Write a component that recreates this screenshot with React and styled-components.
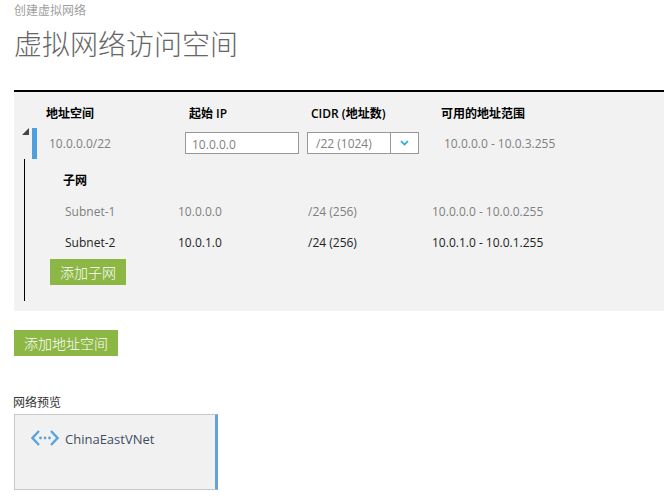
import React from "react";
import styled, { createGlobalStyle } from "styled-components";

const FONT = `"Open Sans", "Noto Sans CJK SC", sans-serif`;

const GlobalStyle = createGlobalStyle`
  html, body {
    margin: 0;
    padding: 0;
    background: #fff;
    font-family: ${FONT};
  }
`;

const Page = styled.div`
  width: 670px;
  height: 497px;
  overflow: hidden;
  padding: 2px 6px 0 14px;
  box-sizing: border-box;
`;

const Crumb = styled.div`
  font-size: 12px;
  line-height: 17px;
  color: #a0a0a0;
`;

const Title = styled.h1`
  margin: 6px 0 0;
  font-size: 28px;
  line-height: 38px;
  font-weight: 300;
  color: #666;
`;

const Panel = styled.section`
  margin-top: 27px;
  height: 221px;
  box-sizing: border-box;
  border-top: 2px solid #000;
  background: #f2f2f2;
  padding-top: 10px;
`;

const SpaceHead = styled.div`
  display: grid;
  grid-template-columns: 143px 122px 130px 1fr;
  padding-left: 32px;
  height: 21px;
  align-items: center;
  font-size: 12px;
  font-weight: 600;
  color: #000;
`;

const SpaceRow = styled.div`
  display: flex;
  align-items: center;
  height: 31px;
  margin-top: 5px;
  position: relative;
`;

const Caret = styled.span`
  position: absolute;
  left: 8px;
  top: 0;
  width: 0;
  height: 0;
  border-left: 7px solid transparent;
  border-bottom: 7px solid #444;
`;

const Marker = styled.span`
  width: 5px;
  height: 31px;
  margin-left: 18px;
  background: #4f9fdc;
`;

const SpaceValue = styled.span`
  width: 136px;
  margin-left: 12px;
  font-size: 12px;
  color: #7f7f7f;
`;

const Field = styled.div`
  width: 114px;
  height: 22px;
  margin-bottom: 2px;
  box-sizing: border-box;
  border: 1px solid #999;
  background: #fff;
  padding-left: 6px;
  font-size: 12px;
  line-height: 24px;
  color: #7f7f7f;
`;

const Select = styled.div`
  display: flex;
  width: 112px;
  height: 22px;
  margin: 0 0 2px 8px;
  box-sizing: border-box;
  border: 1px solid #999;
  background: #fff;
  font-size: 12px;
  line-height: 22px;
  color: #7f7f7f;
`;

const SelectValue = styled.span`
  flex: 1;
  padding-left: 8px;
`;

const SelectArrow = styled.span`
  display: flex;
  align-items: center;
  justify-content: center;
  width: 27px;
  border-left: 1px solid #999;
`;

const RangeValue = styled.span`
  margin-left: 25px;
  font-size: 12px;
  color: #7f7f7f;
`;

const Subnets = styled.div`
  margin: 0 0 0 10px;
  height: 142px;
  box-sizing: border-box;
  border-left: 1px solid #000;
  padding-top: 11px;
`;

const SubnetTitle = styled.div`
  margin-left: 38px;
  font-size: 12px;
  line-height: 22px;
  font-weight: 600;
  color: #000;
`;

const SubnetList = styled.div`
  margin-top: 4px;
`;

const SubnetRow = styled.div`
  display: grid;
  grid-template-columns: 113px 130px 124px 1fr;
  height: 31px;
  padding-left: 40px;
  align-items: center;
  font-size: 12px;
  color: ${(p) => (p.$active ? "#222" : "#7f7f7f")};
`;

const Button = styled.button`
  display: block;
  height: 26px;
  padding: 0;
  border: 0;
  background: #8cb745;
  color: #fff;
  font-family: ${FONT};
  font-size: 14px;
  font-weight: 300;
`;

const AddSubnet = styled(Button)`
  margin: 1px 0 0 25px;
  width: 76px;
`;

const AddSpace = styled(Button)`
  margin-top: 19px;
  width: 104px;
`;

const PreviewLabel = styled.div`
  margin: 37px 0 0 -1px;
  font-size: 12px;
  line-height: 20px;
  color: #333;
`;

const Tile = styled.div`
  display: flex;
  align-items: flex-start;
  gap: 6px;
  width: 204px;
  height: 76px;
  margin-top: 1px;
  box-sizing: border-box;
  border: 1px solid #c6c6c6;
  border-right: 3px solid #62a4d9;
  background: #f1f1f1;
  padding: 14px 0 0 16px;
  font-size: 13px;
  line-height: 19px;
  color: #3f4d5f;
`;

const TileName = styled.span`
  padding-top: 1px;
`;

const Chevron = () => (
  <svg width="9" height="6" viewBox="0 0 9 6" fill="none">
    <path d="M1 1l3.5 3.5L8 1" stroke="#1aa8e0" strokeWidth="1.6" />
  </svg>
);

const VnetIcon = () => (
  <svg width="28" height="18" viewBox="0 0 28 18" fill="none">
    <path d="M8 2L1.5 9 8 16M20 2l6.5 7-6.5 7" stroke="#5ca3db" strokeWidth="2.4" />
    <circle cx="9.5" cy="9" r="1.4" fill="#5ca3db" />
    <circle cx="14" cy="9" r="1.4" fill="#5ca3db" />
    <circle cx="18.5" cy="9" r="1.4" fill="#5ca3db" />
  </svg>
);

const subnets = [
  { name: "Subnet-1", ip: "10.0.0.0", cidr: "/24 (256)", range: "10.0.0.0 - 10.0.0.255" },
  { name: "Subnet-2", ip: "10.0.1.0", cidr: "/24 (256)", range: "10.0.1.0 - 10.0.1.255", active: true },
];

export default function App() {
  return (
    <Page>
      <GlobalStyle />
      <Crumb>创建虚拟网络</Crumb>
      <Title>虚拟网络访问空间</Title>
      <Panel>
        <SpaceHead>
          <span>地址空间</span>
          <span>起始 IP</span>
          <span>CIDR (地址数)</span>
          <span>可用的地址范围</span>
        </SpaceHead>
        <SpaceRow>
          <Caret />
          <Marker />
          <SpaceValue>10.0.0.0/22</SpaceValue>
          <Field>10.0.0.0</Field>
          <Select>
            <SelectValue>/22 (1024)</SelectValue>
            <SelectArrow>
              <Chevron />
            </SelectArrow>
          </Select>
          <RangeValue>10.0.0.0 - 10.0.3.255</RangeValue>
        </SpaceRow>
        <Subnets>
          <SubnetTitle>子网</SubnetTitle>
          <SubnetList>
            {subnets.map((s) => (
              <SubnetRow key={s.name} $active={s.active}>
                <span>{s.name}</span>
                <span>{s.ip}</span>
                <span>{s.cidr}</span>
                <span>{s.range}</span>
              </SubnetRow>
            ))}
          </SubnetList>
          <AddSubnet>添加子网</AddSubnet>
        </Subnets>
      </Panel>
      <AddSpace>添加地址空间</AddSpace>
      <PreviewLabel>网络预览</PreviewLabel>
      <Tile>
        <VnetIcon />
        <TileName>ChinaEastVNet</TileName>
      </Tile>
    </Page>
  );
}
